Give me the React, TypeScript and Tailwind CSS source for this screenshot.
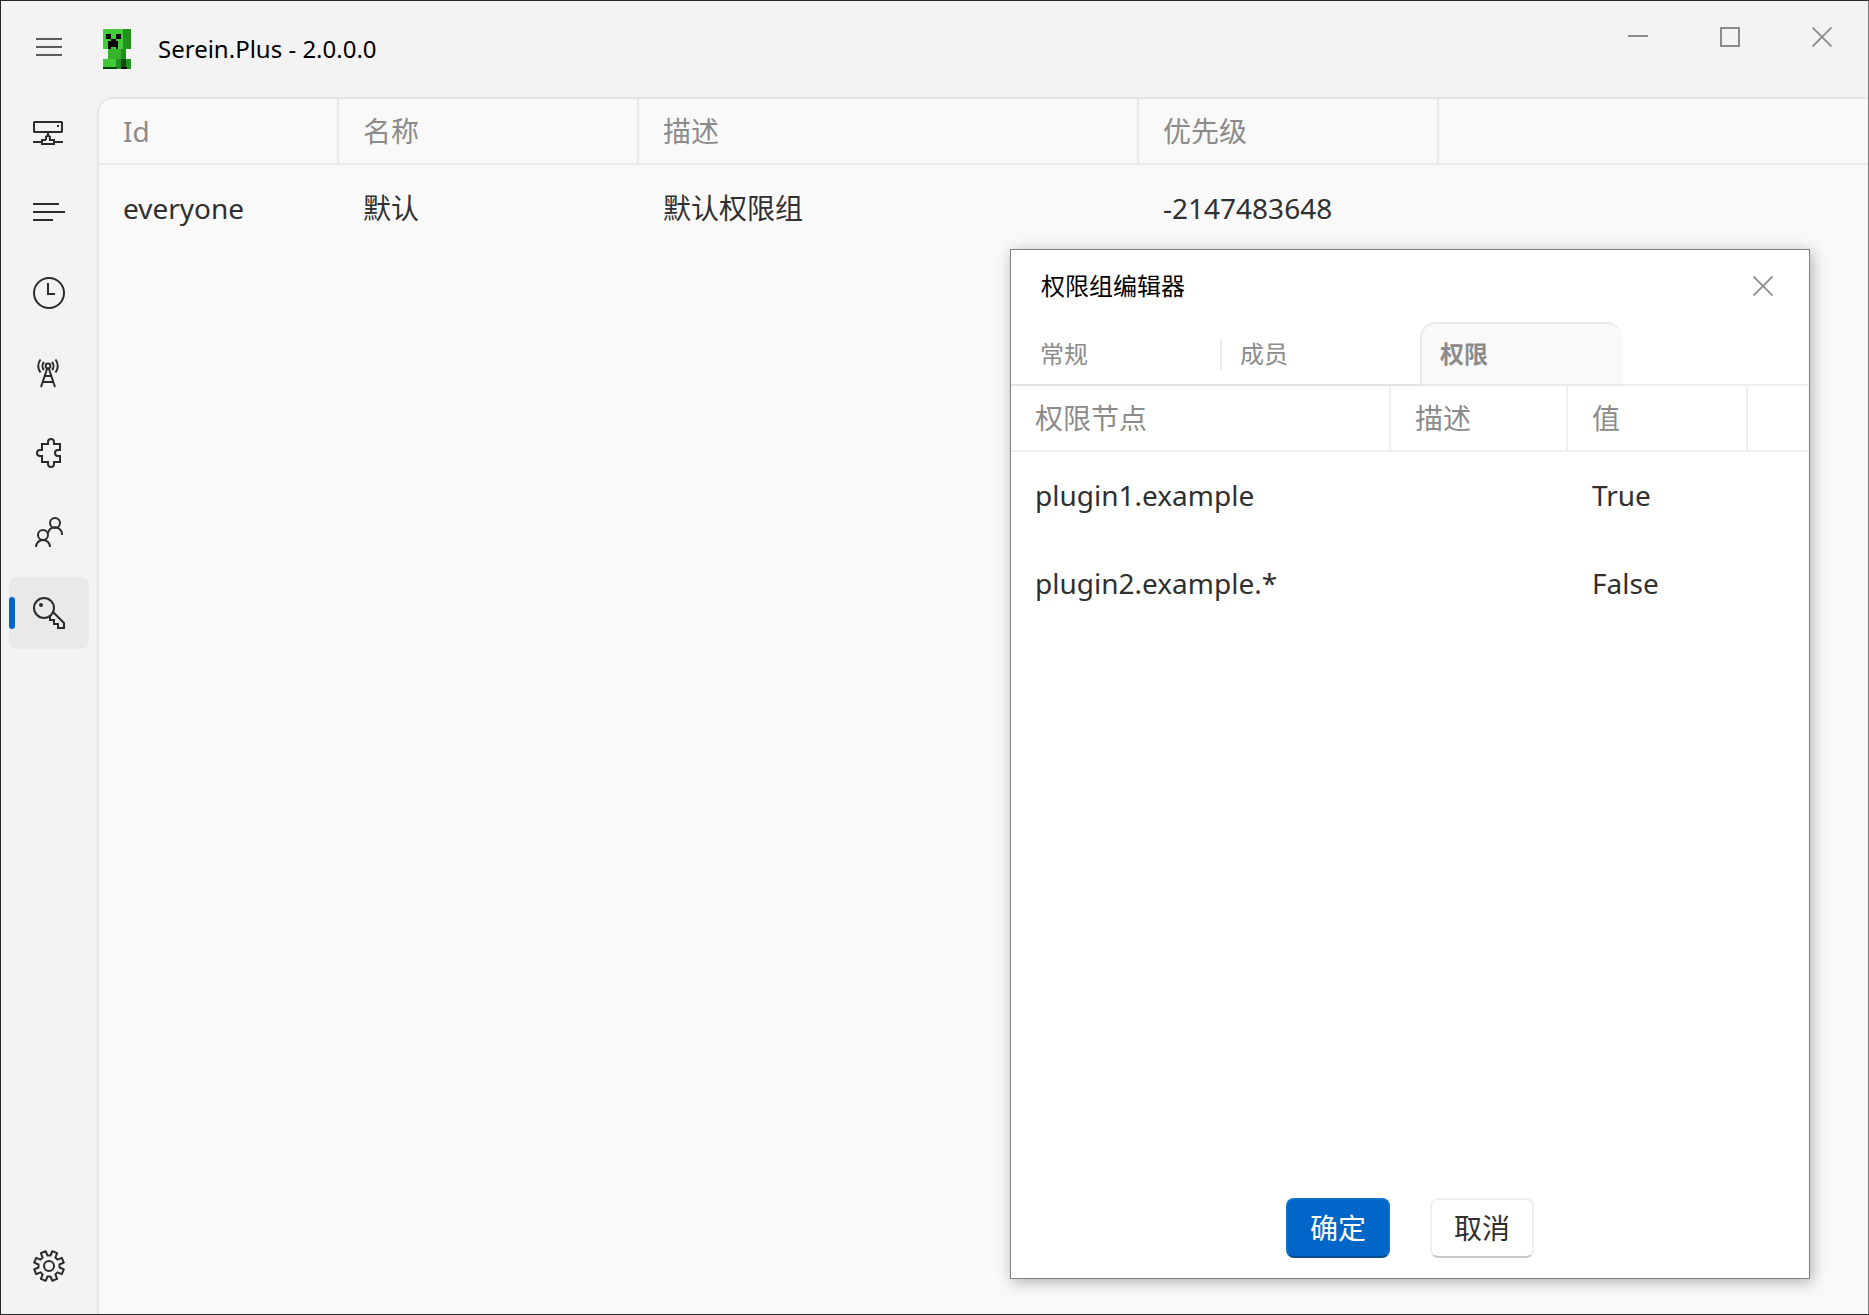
import type { ReactNode } from 'react';

const gearPath = (() => {
  const tooth = [
    [-1.5, -10.5],
    [1.5, -10.5],
    [3.3, -14.8],
    [8.1, -12.8],
  ];
  const points: string[] = [];
  for (let i = 0; i < 8; i++) {
    const a = (i * Math.PI) / 4;
    for (const [x, y] of tooth) {
      const px = 40 + x * Math.cos(a) - y * Math.sin(a);
      const py = 36 + x * Math.sin(a) + y * Math.cos(a);
      points.push(`${px.toFixed(2)} ${py.toFixed(2)}`);
    }
  }
  return `M${points.join('L')}Z`;
})();

type NavItem = { label: string; icon: ReactNode; active?: boolean };

const navItems: NavItem[] = [
  {
    label: '服务器',
    icon: (
      <>
        <rect x="25" y="25" width="28" height="10" rx="0.5" />
        <path d="M48 29h2M39 35v4M37 43v-3l1-1h2l1 1v3h4v4H33v-4h4M24 45h9M45 45h9" />
      </>
    ),
  },
  { label: '匹配', icon: <path d="M24 27h26M24 35h32M24 43h20" /> },
  {
    label: '定时任务',
    icon: (
      <>
        <circle cx="40" cy="36" r="15" />
        <path d="M39 26v11h7" />
      </>
    ),
  },
  {
    label: '连接',
    icon: (
      <>
        <circle cx="39" cy="29" r="2.4" />
        <path d="M38.2 31.5L32 50M39.8 31.5L46 50M36 39h6M34 45h10" />
        <path d="M35 25a6 6 0 0 0 0 8M43 25a6 6 0 0 1 0 8M31.5 22.5a10.5 10.5 0 0 0 0 13M46.5 22.5a10.5 10.5 0 0 1 0 13" />
      </>
    ),
  },
  {
    label: '插件',
    icon: (
      <path d="M33 27h6v-2a3 3 0 0 1 6 0v2h6v6h-2a3 3 0 0 0 0 6h2v6h-6v2a3 3 0 0 1-6 0v-2h-6v-6h-2a3 3 0 0 1 0-6h2z" />
    ),
  },
  {
    label: '绑定',
    icon: (
      <>
        <circle cx="46" cy="26" r="5" />
        <circle cx="34" cy="38" r="5" />
        <path d="M27 50a7 7 0 0 1 14 0M39 36.5a7 7 0 0 1 14 1.5" />
      </>
    ),
  },
  {
    label: '权限组',
    active: true,
    icon: (
      <>
        <circle cx="35" cy="31" r="10" />
        <circle cx="32" cy="28" r="2" fill="currentColor" stroke="none" />
        <path d="M44 35l11 11v5h-6v-4h-4v-4h-4v-4" />
      </>
    ),
  },
];

const settingsItem: NavItem = {
  label: '设置',
  icon: (
    <>
      <path d={gearPath} strokeLinejoin="round" />
      <circle cx="40" cy="36" r="5" />
    </>
  ),
};

function NavButton({ item }: { item: NavItem }) {
  return (
    <button
      aria-label={item.label}
      className={`relative flex h-[72px] w-20 items-center justify-center rounded-lg text-[#2b2b2b] ${
        item.active ? 'bg-[#e9e9e9]' : ''
      }`}
    >
      {item.active && <span className="absolute left-0 top-5 h-8 w-1.5 rounded-full bg-[#0067c8]" />}
      <svg viewBox="0 0 80 72" className="size-full" fill="none" stroke="currentColor" strokeWidth="2">
        {item.icon}
      </svg>
    </button>
  );
}

function Creeper() {
  return (
    <svg viewBox="0 0 28 40" className="h-10 w-7" shapeRendering="crispEdges" aria-hidden="true">
      <path fill="#43cb39" d="M0 0h20v20H0zM7 30h6v8H7z" />
      <path fill="#22921e" d="M20 0h8v20h-8zM18 20h5v10h-5zM13 30h5v10h-5zM23 30h5v10h-5z" />
      <path fill="#37b22d" d="M5 20h13v10H5z" />
      <path fill="#3fc535" d="M0 30h7v8H0z" />
      <path fill="#134a0f" d="M18 30h5v8h-5z" />
      <path fill="#03400a" d="M0 38h14v2H0z" />
      <path
        fill="#000"
        d="M3 5h5v5H3zM13 5h5v5h-5zM8 10h5v2h2v8h-2v-2H8v2H5v-8h3zM18 38h6v2h-6z"
      />
    </svg>
  );
}

function CloseGlyph() {
  return (
    <svg viewBox="0 0 20 20" className="size-5" fill="none" stroke="#8b8b8b" strokeWidth="1.8">
      <path d="M0.5 0.5l19 19M19.5 0.5l-19 19" />
    </svg>
  );
}

const th = 'h-[66px] border-b-2 border-r-2 border-[#e9e9e9] px-6 text-left font-normal text-[#8b8b8b]';
const dialogTh = 'h-[66px] border-b-2 border-r-2 border-[#efefef] px-6 text-left font-normal text-[#8b8b8b]';
const td = 'h-[88px] whitespace-nowrap px-6 pb-0.5';

const permissions = [
  { node: 'plugin1.example', description: '', value: 'True' },
  { node: 'plugin2.example.*', description: '', value: 'False' },
];

function EditorDialog() {
  return (
    <section
      role="dialog"
      aria-label="权限组编辑器"
      className="absolute right-[58px] top-[248px] flex h-[1030px] w-[800px] flex-col border border-[#808080] bg-white shadow-[2px_3px_14px_rgba(0,0,0,0.3)]"
    >
      <header className="flex h-[72px] items-center justify-between pl-[30px] pr-4">
        <h2 className="text-2xl text-black">权限组编辑器</h2>
        <button aria-label="关闭" className="flex size-[60px] items-center justify-center">
          <CloseGlyph />
        </button>
      </header>
      <div role="tablist" className="flex h-16 text-2xl text-[#8b8b8b]">
        <span className="w-[11px] border-b-2 border-[#e3e3e3]" />
        <button role="tab" aria-selected="false" className="flex w-50 items-center border-b-2 border-[#e3e3e3] pl-[18px] pt-0.5">
          <span className="flex h-8 flex-1 items-center border-r-2 border-[#ebebeb]">常规</span>
        </button>
        <button role="tab" aria-selected="false" className="w-[198px] border-b-2 border-[#e3e3e3] pl-[18px] pt-0.5 text-left">
          成员
        </button>
        <button
          role="tab"
          aria-selected="true"
          className="w-[202px] rounded-t-2xl border-b-2 border-l-2 border-t-2 border-[#e9e9e9] bg-[#f9f9f9] pl-[18px] text-left font-bold"
        >
          权限
        </button>
        <span className="flex-1 border-b-2 border-[#efefef]" />
      </div>
      <div className="flex-1">
        <table className="w-full table-fixed border-separate border-spacing-0 text-[28px] text-[#303030]">
          <colgroup>
            <col className="w-[380px]" />
            <col className="w-[177px]" />
            <col className="w-[180px]" />
            <col />
          </colgroup>
          <thead>
            <tr>
              <th className={dialogTh}>权限节点</th>
              <th className={dialogTh}>描述</th>
              <th className={dialogTh}>值</th>
              <td className="border-b-2 border-[#efefef]" />
            </tr>
          </thead>
          <tbody>
            {permissions.map((p) => (
              <tr key={p.node}>
                <td className={td}>{p.node}</td>
                <td className={td}>{p.description}</td>
                <td className={td}>{p.value}</td>
                <td />
              </tr>
            ))}
          </tbody>
        </table>
      </div>
      <footer className="flex justify-center gap-10 pb-5 text-[28px]">
        <button className="flex h-[60px] w-[104px] items-center justify-center rounded-lg border-2 border-[#0f70cb] border-b-[#0a4a8a] bg-[#0067c8] text-white">
          确定
        </button>
        <button className="flex h-[60px] w-[104px] items-center justify-center rounded-lg border-2 border-[#efefef] border-b-[#c8c8c8] bg-white text-[#303030]">
          取消
        </button>
      </footer>
    </section>
  );
}

export default function App() {
  return (
    <div className="relative flex h-screen flex-col border border-[#29262b] border-r-[#777777] bg-[#f3f3f3] font-['Noto_Sans','Noto_Sans_CJK_SC',sans-serif]">
      <header className="flex h-24 shrink-0">
        <div className="flex flex-1 items-center">
          <button aria-label="导航菜单" className="flex h-[72px] w-24 items-center justify-center pb-1">
            <svg viewBox="0 0 26 18" className="h-[18px] w-[26px]" fill="none" stroke="#2b2b2b" strokeWidth="1.6">
              <path d="M0 1h26M0 9h26M0 17h26" />
            </svg>
          </button>
          <div className="flex items-center gap-[27px] pl-1.5">
            <Creeper />
            <h1 className="text-2xl text-black">Serein.Plus - 2.0.0.0</h1>
          </div>
        </div>
        <div className="flex h-[72px]">
          <button aria-label="最小化" className="flex w-[92px] items-center justify-center pb-0.5">
            <span className="h-0.5 w-5 bg-[#8b8b8b]" />
          </button>
          <button aria-label="最大化" className="flex w-[92px] items-center justify-center">
            <span className="size-5 border-2 border-[#8b8b8b]" />
          </button>
          <button aria-label="关闭窗口" className="flex w-[92px] items-center justify-center">
            <CloseGlyph />
          </button>
        </div>
      </header>
      <div className="flex min-h-0 flex-1">
        <nav className="flex w-24 shrink-0 flex-col gap-2 pb-3 pl-2">
          {navItems.map((item) => (
            <NavButton key={item.label} item={item} />
          ))}
          <div className="flex-1" />
          <NavButton item={settingsItem} />
        </nav>
        <main className="flex-1 overflow-hidden rounded-tl-2xl border-l-2 border-t-2 border-[#e5e5e5] bg-[#f9f9f9]">
          <table className="w-full table-fixed border-separate border-spacing-0 text-[28px] text-[#303030]">
            <colgroup>
              <col className="w-60" />
              <col className="w-75" />
              <col className="w-[500px]" />
              <col className="w-75" />
              <col />
            </colgroup>
            <thead>
              <tr>
                <th className={th}>Id</th>
                <th className={th}>名称</th>
                <th className={th}>描述</th>
                <th className={th}>优先级</th>
                <td className="border-b-2 border-[#e9e9e9]" />
              </tr>
            </thead>
            <tbody>
              <tr>
                <td className={td}>everyone</td>
                <td className={td}>默认</td>
                <td className={td}>默认权限组</td>
                <td className={td}>-2147483648</td>
                <td />
              </tr>
            </tbody>
          </table>
        </main>
      </div>
      <EditorDialog />
    </div>
  );
}
